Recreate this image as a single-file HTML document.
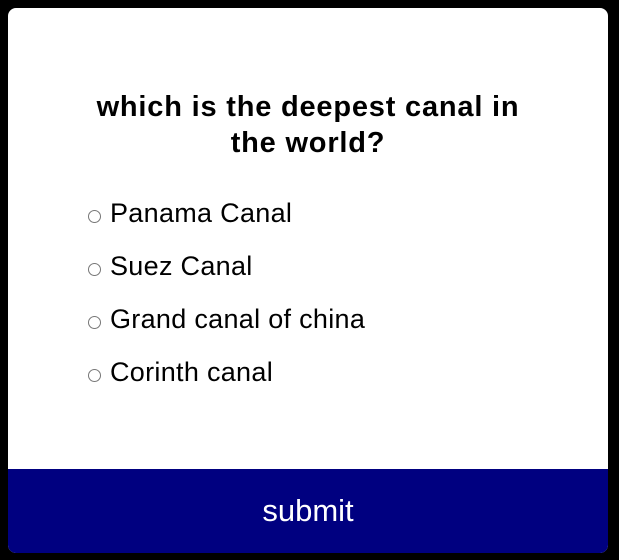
<!DOCTYPE html>
<html><head><style>
html,body{margin:0;padding:0;background:#000;width:619px;height:560px;overflow:hidden}
.card{position:absolute;left:8px;top:8px;width:600px;height:545px;background:#fff;border-radius:8px;overflow:hidden}
h1{position:absolute;left:0;width:600px;top:81px;margin:0;text-align:center;font:bold 29px/36px "Liberation Sans",sans-serif;letter-spacing:0.8px;color:#000}
.opt{position:absolute;left:80px;font:27px "Liberation Sans",sans-serif;color:#000;height:30px;line-height:30px;white-space:nowrap;letter-spacing:0.3px}
.opt i{display:inline-block;width:11px;height:11px;border:1px solid #777;border-radius:50%;margin-right:9px;vertical-align:-1px}
.foot{position:absolute;left:0;top:461px;width:600px;height:84px;background:#000080;color:#fff;text-align:center;font:31px/84px "Liberation Sans",sans-serif}
</style></head><body>
<div class="card">
<h1>which is the deepest canal in<br>the world?</h1>
<div class="opt" style="top:190px"><i></i>Panama Canal</div>
<div class="opt" style="top:243px"><i></i>Suez Canal</div>
<div class="opt" style="top:296px"><i></i>Grand canal of china</div>
<div class="opt" style="top:349px"><i></i>Corinth canal</div>
<div class="foot">submit</div>
</div>
</body></html>
